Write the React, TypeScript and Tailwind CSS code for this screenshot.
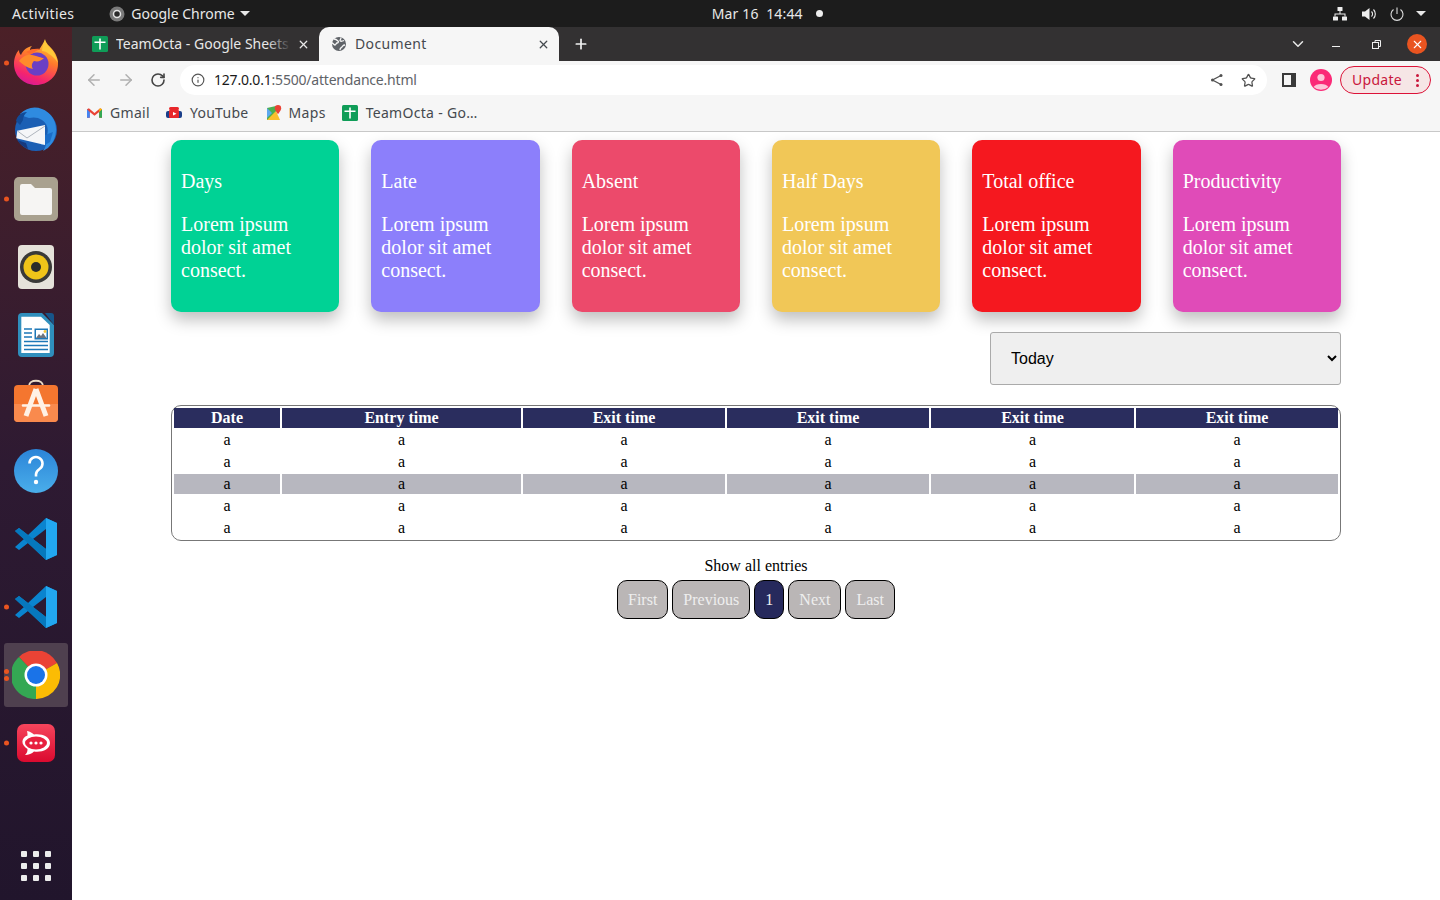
import { ArrowLeft, ArrowRight, ChevronDown, Info, Plus, RotateCw, Star, X } from "lucide-react";

const CARDS = [
  { title: "Days", color: "bg-[#00d295]" },
  { title: "Late", color: "bg-[#8c7ffb]" },
  { title: "Absent", color: "bg-[#ec4a6b]" },
  { title: "Half Days", color: "bg-[#f1c757]" },
  { title: "Total office", color: "bg-[#f5181f]" },
  { title: "Productivity", color: "bg-[#e04bb8]" },
];

const HEADERS = ["Date", "Entry time", "Exit time", "Exit time", "Exit time", "Exit time"];
const COL_WIDTHS = [106, 239, 202, 202, 203, 202];
const ROWS = [false, false, true, false, false];

function SheetsIcon({ className }: { className?: string }) {
  return (
    <svg viewBox="0 0 16 16" className={className}>
      <rect width="16" height="16" rx="1.5" fill="#0f9d58" />
      <path d="M7.2 2.5h1.600v3h4.700v1.600H8.800v6.400H7.200V7.100H2.500V5.500h4.700z" fill="#fff" />
    </svg>
  );
}

function Firefox() {
  return (
    <svg viewBox="0 0 48 48" className="mb-[3px] h-12 w-12">
      <defs>
        <linearGradient id="ffa" x1="0.7" y1="0" x2="0.3" y2="1">
          <stop offset="0" stopColor="#ffd43a" />
          <stop offset="0.4" stopColor="#ff7a2b" />
          <stop offset="0.8" stopColor="#f5246e" />
          <stop offset="1" stopColor="#d61a9a" />
        </linearGradient>
      </defs>
      <path d="M33 1c1 5 4 6 7 10 4 5 6 9 6 15 0 12-10 21-22 21S2 38 2 26c0-6 2-11 5-14 0 3 1 4 2 5 2-5 6-8 11-9-2 2-2 3-2 4 3-1 6-1 9 0 2-4 5-7 6-11z" fill="url(#ffa)" />
      <path d="M33 2c1 5 4 6 7 10 3 4 5 8 6 13-3-5-6-7-9-9-2-2-5-3-7-3 0-4 2-8 3-11z" fill="#ffc93a" />
      <circle cx="25" cy="26" r="11.5" fill="#6b3fc4" />
      <path d="M7 23c3-4 8-7 13-6 6 1 9 3 12 3-3 3-6 4-10 3-2 2-3 5-1 8-5-1-10-4-14-8z" fill="#ff8b2b" />
      <path d="M14 14c4-3 10-4 15-3-4 1-7 3-9 5-2 0-4-1-6-2z" fill="#ff6a2b" />
    </svg>
  );
}

function Thunderbird() {
  return (
    <svg viewBox="0 0 48 48" className="h-12 w-12">
      <circle cx="24" cy="23" r="21" fill="#1b5fb4" />
      <path d="M8 7c6-6 14-8 22-5 8 3 14 11 14 20 0 8-3 14-8 19-2 1-3 2-5 3 2-3 3-5 3-8-1 1-3 2-5 2l6-10c2-6 0-12-5-15-4-3-9-3-13-2-3-1-6-2-9-4z" fill="#2f8be0" />
      <path d="M4 14c1-5 5-9 11-9-3 3-4 5-4 8l-3 5z" fill="#124a96" />
      <path d="M5.300 23.700L33 18v20L4.300 31.300z" fill="#f5f6f8" />
      <path d="M5.500 24l9.500 7 18-12" fill="none" stroke="#a6adb6" strokeWidth="0.9" />
      <path d="M5 33c3 4 6 7 11 9l-2-6z" fill="#16397e" />
      <path d="M33 28l8-3-3 10-5 3z" fill="#1b6ec9" />
    </svg>
  );
}

function Files() {
  return (
    <svg viewBox="0 0 44 44" className="h-11 w-11">
      <rect width="44" height="44" rx="5" fill="#a9a18f" />
      <path d="M6 9a2 2 0 0 1 2-2h9l4 4h15a2 2 0 0 1 2 2v23a2 2 0 0 1-2 2H8a2 2 0 0 1-2-2z" fill="#f6f5f3" />
    </svg>
  );
}

function Rhythmbox() {
  return (
    <svg viewBox="0 0 36 44" className="h-11 w-9">
      <rect width="36" height="44" rx="4" fill="#e5e2da" />
      <circle cx="18" cy="22" r="16" fill="#3a3a38" />
      <circle cx="18" cy="22" r="12.5" fill="#f0c419" />
      <circle cx="18" cy="22" r="5" fill="#2c2c2a" />
    </svg>
  );
}

function Writer() {
  return (
    <svg viewBox="0 0 36 44" className="h-11 w-9">
      <path d="M4 0h20l12 12v28a4 4 0 0 1-4 4H4a4 4 0 0 1-4-4V4a4 4 0 0 1 4-4z" fill="#2f8fbd" />
      <path d="M3.300 3.700H23l8.700 8.300v28H3.300z" fill="#fff" />
      <path d="M27 0h6a3 3 0 0 1 3 3v9z" fill="#17558a" />
      <path d="M6 16h8M6 20h8M6 24h8M6 28.500h24M6 32.500h24M6 36.500h24" stroke="#1d78b8" strokeWidth="1.7" />
      <rect x="16.500" y="15.500" width="13.500" height="11" fill="#1d78b8" />
      <rect x="18" y="17" width="10.500" height="8" fill="#fff" />
      <path d="M18 25l3-4 2 2 2-3 3.500 5z" fill="#6b7480" />
      <circle cx="27" cy="18.500" r="1.400" fill="#f2c83a" />
    </svg>
  );
}

function AppStore() {
  return (
    <svg viewBox="0 0 44 48" className="mb-[3px] h-12 w-11">
      <path d="M15 8c0-7 14-7 14 0" fill="none" stroke="#eadcc6" strokeWidth="2" />
      <rect y="7" width="44" height="37" rx="4" fill="#f4762f" />
      <path d="M0 26h44v14a4 4 0 0 1-4 4H4a4 4 0 0 1-4-4z" fill="#f98a4d" />
      <path d="M22 11L12 38M22 11l10 27" stroke="#fff2e6" strokeWidth="5" fill="none" />
      <path d="M9 27.500h26" stroke="#fff2e6" strokeWidth="2.500" strokeLinecap="round" />
    </svg>
  );
}

function Help() {
  return (
    <svg viewBox="0 0 44 44" className="h-11 w-11">
      <defs>
        <linearGradient id="hp" x1="0" y1="0" x2="0" y2="1">
          <stop offset="0" stopColor="#2b84d8" />
          <stop offset="1" stopColor="#4aaeea" />
        </linearGradient>
      </defs>
      <circle cx="22" cy="22" r="22" fill="url(#hp)" />
      <path d="M15.500 14.500a6.500 6.500 0 1 1 10 5.500c-2.500 1.700-3.500 3-3.500 5.500v2" fill="none" stroke="#fff" strokeWidth="2.600" />
      <circle cx="22" cy="33" r="2.200" fill="#fff" />
    </svg>
  );
}

function VSCode() {
  return (
    <svg viewBox="0 0 44 44" className="h-11 w-11">
      <path d="M32 1l11 5v32l-11 5-18-17-9 7-4-3 9-8-9-8 4-3 9 7z" fill="#0a84cf" />
      <path d="M32 1l11 5v32l-11 5z" fill="#22a7f0" />
      <path d="M32 12L19 22l13 10z" fill="#2c1a33" />
      <path d="M1 14l4-3 27 21v11z" fill="#0678bd" />
    </svg>
  );
}

function Chrome() {
  return (
    <svg viewBox="0 0 48 48" className="h-12 w-12">
      <path d="M24 24L7 6a24 24 0 0 1 38 6z" fill="#ea4335" />
      <path d="M24 24L7 6A24 24 0 0 0 24 48l10-18z" fill="#34a853" />
      <path d="M24 24l21-12a24 24 0 0 1-21 36z" fill="#fbbc04" />
      <circle cx="24" cy="24" r="11.500" fill="#fff" />
      <circle cx="24" cy="24" r="9" fill="#1a73e8" />
    </svg>
  );
}

function RocketChat() {
  return (
    <svg viewBox="0 0 38 38" className="h-[38px] w-[38px]">
      <defs>
        <linearGradient id="rc" x1="0" y1="0" x2="0" y2="1">
          <stop offset="0" stopColor="#f5455c" />
          <stop offset="1" stopColor="#db0a2f" />
        </linearGradient>
      </defs>
      <rect width="38" height="38" rx="7" fill="url(#rc)" />
      <path d="M10 7c3 .5 5.500 2 7 3.500 8-1 16 2 16 8.500s-8 9.500-16 8.500c-2 2-5.500 3.500-9 3.500 2-2 2.500-3.500 2.500-6C3.500 20.500 4 14 10.500 11.500 10.500 10 10.500 8.500 10 7z" fill="#fff" />
      <ellipse cx="19" cy="19" rx="11" ry="6.500" fill="#e8203f" />
      <circle cx="14" cy="19" r="1.600" fill="#fff" />
      <circle cx="19" cy="19" r="1.600" fill="#fff" />
      <circle cx="24" cy="19" r="1.600" fill="#fff" />
    </svg>
  );
}

function AppGrid() {
  return (
    <div className="grid grid-cols-3 gap-[6px]">
      {Array.from({ length: 9 }).map((_, i) => (
        <span key={i} className="h-[6px] w-[6px] rounded-[1px] bg-[#ececec]" />
      ))}
    </div>
  );
}

function DockItem({ dots = 0, active = false, children }: { dots?: number; active?: boolean; children: React.ReactNode }) {
  return (
    <div className="relative flex h-[68px] w-[72px] items-center justify-center">
      {active && <div className="absolute inset-x-[4px] inset-y-[2px] rounded-[3px] bg-[#4f404f]" />}
      <div className="relative flex items-center justify-center">{children}</div>
      {dots > 0 && (
        <div className="absolute left-[4px] top-1/2 flex -translate-y-1/2 flex-col gap-[2px]">
          {Array.from({ length: dots }).map((_, i) => (
            <span key={i} className="h-[5px] w-[5px] rounded-full bg-[#e95420]" />
          ))}
        </div>
      )}
    </div>
  );
}

function Dock() {
  return (
    <aside className="flex w-[72px] shrink-0 flex-col bg-gradient-to-b from-[#4b2027] via-[#2e1a32] to-[#21152c] pt-[2px]">
      <DockItem dots={1}><Firefox /></DockItem>
      <DockItem><Thunderbird /></DockItem>
      <DockItem dots={1}><Files /></DockItem>
      <DockItem><Rhythmbox /></DockItem>
      <DockItem><Writer /></DockItem>
      <DockItem><AppStore /></DockItem>
      <DockItem><Help /></DockItem>
      <DockItem><VSCode /></DockItem>
      <DockItem dots={1}><VSCode /></DockItem>
      <DockItem dots={2} active><Chrome /></DockItem>
      <DockItem dots={1}><RocketChat /></DockItem>
      <div className="mt-auto mb-[19px] flex justify-center">
        <AppGrid />
      </div>
    </aside>
  );
}

function TopBar() {
  return (
    <header className="flex h-[27px] shrink-0 items-center bg-[#1c1c1c] pl-[12px] pr-[14px] font-['Noto_Sans',sans-serif] text-[14px] text-[#e8e8e8]">
      <span className="tracking-[0.4px]">Activities</span>
      <svg viewBox="0 0 16 16" className="ml-[35px] h-4 w-4">
        <circle cx="8" cy="8" r="7.5" fill="#7a7a7a" />
        <circle cx="8" cy="8" r="3.5" fill="#2a2a2a" stroke="#e5e5e5" strokeWidth="1.5" />
      </svg>
      <span className="ml-[6px]">Google Chrome</span>
      <span className="ml-[5px] h-0 w-0 border-x-[5px] border-t-[5px] border-x-transparent border-t-[#e8e8e8]" />
      <span className="ml-[462px] tracking-[0.15px]">Mar 16&nbsp; 14:44</span>
      <span className="ml-[13px] h-[7px] w-[7px] rounded-full bg-[#eeeeee]" />
      <div className="ml-auto flex items-center">
        <svg viewBox="0 0 16 16" className="h-4 w-4" fill="#eeeeee">
          <rect x="5.5" y="1" width="5" height="4" rx="0.6" />
          <rect x="1" y="10.5" width="5" height="4" rx="0.6" />
          <rect x="10" y="10.5" width="5" height="4" rx="0.6" />
          <path d="M7.500 5h1v2.500h5v3h-1v-2h-9v2h-1v-3h5z" />
        </svg>
        <svg viewBox="0 0 16 16" className="ml-[13px] h-4 w-4" fill="#eeeeee">
          <path d="M1 5.500h3L8.500 2v12L4 10.500H1z" />
          <path d="M10.500 5.500a3.500 3.500 0 0 1 0 5M12.500 3.500a6.500 6.500 0 0 1 0 9" fill="none" stroke="#eeeeee" strokeWidth="1.1" />
        </svg>
        <svg viewBox="0 0 16 16" className="ml-[12px] h-4 w-4" fill="none" stroke="#dddddd" strokeWidth="1.1">
          <path d="M8 1.500v6.500" />
          <path d="M4.500 3.500a6 6 0 1 0 7 0" />
        </svg>
        <span className="ml-[11px] h-0 w-0 border-x-[5px] border-t-[5px] border-x-transparent border-t-[#e8e8e8]" />
      </div>
    </header>
  );
}

function TabStrip() {
  return (
    <div className="flex h-[34px] items-stretch bg-[#333132] pl-[20px] font-['Noto_Sans',sans-serif] text-[14px]">
      <div className="flex w-[227px] items-center text-[#e8e8e8]">
        <SheetsIcon className="h-4 w-4 shrink-0" />
        <span className="relative ml-[8px] w-[175px] overflow-hidden whitespace-nowrap pb-[2px]">
          TeamOcta - Google Sheets
          <span className="absolute inset-y-0 right-0 w-[24px] bg-gradient-to-r from-transparent to-[#333132]" />
        </span>
        <X className="ml-[6px] h-[13px] w-[13px] shrink-0" strokeWidth={2.4} />
      </div>
      <div className="flex w-[240px] items-center rounded-t-[10px] bg-[#f6f6f6] pl-[12px] pr-[9px] text-[#45494e]">
        <svg viewBox="0 0 16 16" className="h-4 w-4 shrink-0">
          <circle cx="8" cy="8" r="7" fill="#5f6368" />
          <path d="M3 3c2 0 3 1 4 2s0 2-1 2-1 2-2 2-2-2-3-2M9 14c0-2 1-2 2-3s1-2 3-2M10 1.500c0 2-1 2-1 3s2 1 4 0" fill="none" stroke="#f6f6f6" strokeWidth="1.3" />
        </svg>
        <span className="ml-[8px] pb-[2px] tracking-[0.35px]">Document</span>
        <X className="ml-auto h-[13px] w-[13px]" strokeWidth={2.4} />
      </div>
      <div className="ml-[14px] flex items-center">
        <Plus className="h-[16px] w-[16px] text-[#f0f0f0]" strokeWidth={2.6} />
      </div>
      <div className="ml-auto flex items-center pr-[13px] text-[#e8e8e8]">
        <ChevronDown className="mr-[1px] h-[18px] w-[18px]" strokeWidth={2} />
        <span className="ml-[24px] mt-[5px] h-[1.5px] w-[8px] bg-[#f0f0f0]" />
        <svg viewBox="0 0 9 9" className="ml-[32px] h-[9px] w-[9px]" fill="none" stroke="#f0f0f0">
          <rect x="0.5" y="2.5" width="6" height="6" />
          <path d="M3 2.500v-2h5.500v6h-2" />
        </svg>
        <span className="ml-[26px] flex h-[20px] w-[20px] items-center justify-center rounded-full bg-[#e95420]">
          <X className="h-[13px] w-[13px] text-white" strokeWidth={2} />
        </span>
      </div>
    </div>
  );
}

function Toolbar() {
  return (
    <div className="flex h-[34px] items-center bg-[#f6f6f6] pl-[13px] pr-[8px] pt-[4px] font-['Noto_Sans',sans-serif]">
      <ArrowLeft className="h-[18px] w-[18px] text-[#b0b0b0]" strokeWidth={2} />
      <ArrowRight className="ml-[14px] h-[18px] w-[18px] text-[#b0b0b0]" strokeWidth={2} />
      <RotateCw className="ml-[15px] h-[16px] w-[16px] text-[#444444]" strokeWidth={2.4} />
      <div className="ml-[14px] flex h-[30px] w-[1087px] items-center rounded-full bg-white pl-[11px] pr-[11px]">
        <Info className="h-[14px] w-[14px] text-[#555555]" strokeWidth={2} />
        <span className="ml-[9px] whitespace-nowrap pb-[2px] text-[14px] tracking-[-0.2px] text-[#5f6368]">
          <span className="text-[#1a1a1a]">127.0.0.1</span>:5500/attendance.html
        </span>
        <svg viewBox="0 0 14 14" className="ml-auto h-[14px] w-[14px]" fill="#505050" stroke="#505050">
          <circle cx="11" cy="2.5" r="1.5" stroke="none" />
          <circle cx="11" cy="11.5" r="1.5" stroke="none" />
          <circle cx="2.5" cy="7" r="1.5" stroke="none" />
          <path d="M11 2.500L2.500 7l8.500 4.500" fill="none" strokeWidth="1.3" />
        </svg>
        <Star className="ml-[17px] h-[15px] w-[15px] text-[#505050]" strokeWidth={2} />
      </div>
      <span className="ml-[15px] flex h-[14px] w-[14px] justify-start border-2 border-[#3a3a3a] bg-[#3a3a3a]">
        <span className="h-full w-[7px] bg-[#f6f6f6]" />
      </span>
      <svg viewBox="0 0 22 22" className="ml-[14px] h-[22px] w-[22px]">
        <circle cx="11" cy="11" r="11" fill="#fb2a77" />
        <circle cx="11" cy="8.5" r="3.6" fill="#fdc6d8" />
        <path d="M3.600 18a8 5 0 0 1 14.800 0 11 11 0 0 1-14.800 0z" fill="#fdc6d8" />
      </svg>
      <div className="ml-[8px] flex h-[28px] w-[91px] items-center rounded-full border border-[#dc1238] bg-[#f6e6e6] pl-[11px] pr-[11px] text-[14px] tracking-[0.3px] text-[#c9173c]">
        <span className="pb-[2px]">Update</span>
        <span className="ml-auto flex flex-col gap-[2px]">
          <span className="h-[3px] w-[3px] rounded-full bg-[#c9173c]" />
          <span className="h-[3px] w-[3px] rounded-full bg-[#c9173c]" />
          <span className="h-[3px] w-[3px] rounded-full bg-[#c9173c]" />
        </span>
      </div>
    </div>
  );
}

function Bookmarks() {
  return (
    <div className="flex h-[37px] items-center border-b border-[#c8c8c8] bg-[#f6f6f6] pl-[15px] font-['Noto_Sans',sans-serif] text-[14px] tracking-[0.3px] text-[#45494e]">
      <svg viewBox="0 0 16 12" className="h-[12px] w-[15px]">
        <path d="M0 2v9h3V5l5 4 5-4v6h3V2l-2-1-6 5-6-5z" fill="#ea4335" />
        <path d="M0 2v9h3V5z" fill="#4285f4" />
        <path d="M13 5v6h3V2z" fill="#34a853" />
        <path d="M14 1l2 1-3 3V2z" fill="#fbbc04" />
      </svg>
      <span className="ml-[8px] pb-[2px]">Gmail</span>
      <svg viewBox="0 0 16 12" className="ml-[16px] h-[12px] w-[16px]">
        <rect x="3" y="0" width="10" height="3" rx="1.5" fill="#e8272a" />
        <rect y="4" width="16" height="7" rx="2" fill="#1b3f8a" />
        <rect x="3" y="3" width="10" height="8" rx="1" fill="#e8272a" />
        <path d="M7 5l3.500 1.700L7 8.500z" fill="#fff" />
      </svg>
      <span className="ml-[8px] pb-[2px]">YouTube</span>
      <svg viewBox="0 0 16 16" className="ml-[17px] h-4 w-4">
        <path d="M1 3l9-2v14H1z" fill="#4caf50" />
        <path d="M1 15l9-9 4 9z" fill="#fbc02d" />
        <path d="M1 3l5 5-5 5z" fill="#5ea8ee" />
        <path d="M12 0a3.200 3.200 0 0 1 3.200 3.200C15.200 5.500 12 9 12 9S8.800 5.500 8.800 3.200A3.200 3.200 0 0 1 12 0z" fill="#ea4335" />
      </svg>
      <span className="ml-[7px] pb-[2px]">Maps</span>
      <SheetsIcon className="ml-[16px] h-4 w-4" />
      <span className="ml-[8px] pb-[2px]">TeamOcta - Go…</span>
    </div>
  );
}

function Card({ title, color }: { title: string; color: string }) {
  return (
    <div className={`h-[172px] rounded-[10px] ${color} px-[10px] pt-[30px] text-[20px] leading-[23px] text-white shadow-[0_8px_16px_rgba(0,0,0,0.25)]`}>
      <div>{title}</div>
      <div className="mt-[20px]">Lorem ipsum dolor sit amet consect.</div>
    </div>
  );
}

function Pager({ label, active = false }: { label: string; active?: boolean }) {
  return (
    <button
      type="button"
      className={`h-[39px] rounded-[10px] border border-black px-[10px] text-[16px] ${active ? "bg-[#26295c] text-[#eeeeee]" : "bg-[#bab6b6] text-[#eeeeee]"}`}
    >
      {label}
    </button>
  );
}

function Page() {
  return (
    <main className="flex-1 bg-white font-['Liberation_Serif',serif] text-black">
      <div className="mx-auto w-[1170px] pt-[8px]">
        <div className="grid grid-cols-6 gap-[32px]">
          {CARDS.map((card) => (
            <Card key={card.title} title={card.title} color={card.color} />
          ))}
        </div>

        <div className="mt-[20px] flex justify-end">
          <select className="h-[53px] w-[351px] rounded-[3px] border border-[#aaaaaa] bg-[#efefef] pl-[16px] font-['Liberation_Sans',sans-serif] text-[16px] text-black">
            <option>Today</option>
          </select>
        </div>

        <div className="mt-[20px] rounded-[10px] border border-[#777777]">
          <table className="w-full table-fixed border-separate border-spacing-[2px] text-center text-[16px] leading-[20px]">
            <colgroup>
              {COL_WIDTHS.map((w, i) => (
                <col key={i} style={{ width: w }} />
              ))}
            </colgroup>
            <thead>
              <tr>
                {HEADERS.map((h, i) => (
                  <th key={i} className="bg-[#2a2d5e] p-0 font-bold text-white">{h}</th>
                ))}
              </tr>
            </thead>
            <tbody>
              {ROWS.map((shaded, r) => (
                <tr key={r}>
                  {HEADERS.map((_, c) => (
                    <td key={c} className={`p-0 ${shaded ? "bg-[#b7b7bf]" : ""}`}>a</td>
                  ))}
                </tr>
              ))}
            </tbody>
          </table>
        </div>

        <div className="mt-[16px] text-center text-[16px] leading-[18px]">Show all entries</div>
        <div className="mt-[5px] flex justify-center gap-[4px]">
          <Pager label="First" />
          <Pager label="Previous" />
          <Pager label="1" active />
          <Pager label="Next" />
          <Pager label="Last" />
        </div>
      </div>
    </main>
  );
}

export default function App() {
  return (
    <div className="flex h-[900px] w-[1440px] flex-col overflow-hidden">
      <TopBar />
      <div className="flex min-h-0 flex-1">
        <Dock />
        <div className="flex min-w-0 flex-1 flex-col">
          <TabStrip />
          <Toolbar />
          <Bookmarks />
          <Page />
        </div>
      </div>
    </div>
  );
}
